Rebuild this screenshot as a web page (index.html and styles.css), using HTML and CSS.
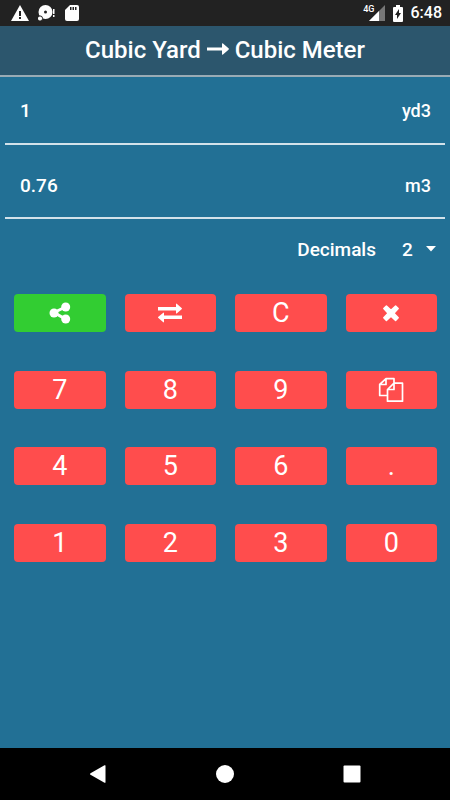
FILE: index.html
```html
<!DOCTYPE html>
<html lang="en">
<head>
<meta charset="utf-8">
<meta name="viewport" content="width=device-width, initial-scale=1">
<title>Cubic Yard to Cubic Meter</title>
<link rel="stylesheet" href="styles.css">
</head>
<body>
<div class="status">
  <div class="status-group notices">
    <svg width="18" height="18" viewBox="0 0 18 18"><path fill="#fff" d="M9 1 18 17H0Z"/><path fill="#222" d="M8 7h2v5H8zM8 13h2v2H8z"/></svg>
    <svg width="18" height="18" viewBox="0 0 18 18"><circle cx="7.500" cy="8" r="7" fill="#fff"/><circle cx="7.500" cy="8" r="1.500" fill="#222"/><circle cx="2" cy="14.500" r="2.600" fill="#fff" stroke="#222"/><path fill="#fff" d="M15 5h1.500v5H15zM15 11h1.500v2H15z"/></svg>
    <svg width="14" height="18" viewBox="0 0 14 18"><path fill="#fff" d="M5 1h7q2 0 2 2v12q0 2-2 2H2q-2 0-2-2V6Z"/><path fill="#222" d="M5 3h1.500v3H5zM7.500 3H9v3H7.500zM10 3h1.500v3H10z"/></svg>
  </div>
  <div class="status-group">
    <div class="signal"><span class="network">4G</span><svg width="16" height="16" viewBox="0 0 16 16"><path fill="#777" d="M16 0v16H0Z"/><path fill="#fff" d="M10 6v10H0Z"/></svg></div>
    <svg class="battery" width="10" height="17" viewBox="0 0 10 17"><path fill="#fff" d="M3 0h4v2h2q1 0 1 1v13q0 1-1 1H1q-1 0-1-1V3q0-1 1-1h2Z"/><path fill="#222" d="M6 4v4h2l-4 6v-4H2Z"/></svg>
    <span class="clock">6:48</span>
  </div>
</div>
<header class="title-bar">
  <h1>Cubic Yard <svg width="22" height="12" viewBox="0 0 22 12" role="img" aria-label="to"><path fill="#fff" d="M0 4.500h15V1q0-1.200 1-.4l5.500 4.700q.8.700 0 1.400L16 11.400q-1 .8-1-.4V7.500H0Z"/></svg> Cubic Meter</h1>
</header>
<main>
  <div class="field">
    <input id="from" type="text" value="1">
    <label for="from">yd3</label>
  </div>
  <div class="field result">
    <input id="to" type="text" value="0.76" readonly>
    <label for="to">m3</label>
  </div>
  <div class="decimals">
    <label for="places">Decimals</label>
    <div class="picker">
      <select id="places"><option>0</option><option>1</option><option selected>2</option><option>3</option><option>4</option></select>
      <svg class="caret" width="10" height="6" viewBox="0 0 10 6"><path fill="#fff" d="M0 0h10L5 5.500Z"/></svg>
    </div>
  </div>
  <div class="keypad">
    <button class="key share" type="button" aria-label="Share"><svg width="22" height="22" viewBox="0 0 22 22"><path d="M16.500 5 5 10.500 16.500 17" fill="none" stroke="#fff" stroke-width="3"/><g fill="#fff"><circle cx="16.700" cy="5" r="4.500"/><circle cx="5" cy="11" r="4.500"/><circle cx="16.700" cy="17" r="4.500"/></g></svg></button>
    <button class="key" type="button" aria-label="Swap units"><svg width="24" height="20" viewBox="0 0 24 20"><path fill="#fff" d="M0 4h18V1.300q0-1.200 1-.4l4.600 4q.8.700 0 1.400L19 10.300q-1 .8-1-.4V7.500H0ZM24 12.500H6V10.300q0-1.200-1-.4L.4 13.700q-.8.700 0 1.400L5 19.100q1 .8 1-.4V16h18Z"/></svg></button>
    <button class="key" type="button">C</button>
    <button class="key" type="button" aria-label="Delete"><svg width="18" height="18" viewBox="0 0 18 18"><path fill="#fff" stroke="#fff" stroke-width="1.500" stroke-linejoin="round" d="M4.400 2 9 6.300 13.600 2 16.200 4.600 11.900 9.200l4.300 4.600-2.600 2.600L9 12.100l-4.600 4.300-2.600-2.600 4.300-4.600-4.300-4.600Z"/></svg></button>
    <button class="key" type="button">7</button>
    <button class="key" type="button">8</button>
    <button class="key" type="button">9</button>
    <button class="key" type="button" aria-label="Copy"><svg width="26" height="26" viewBox="0 0 26 26"><g fill="none" stroke="#fff" stroke-width="1.700" stroke-linejoin="round"><path d="M9.500 18.500H1.700V7.500L8 1.700h8v5M8 1.700v5.800H1.700M16 6.200h8.500v18H9.500V12.500L16 6.200v6.300H9.500"/></g></svg></button>
    <button class="key" type="button">4</button>
    <button class="key" type="button">5</button>
    <button class="key" type="button">6</button>
    <button class="key" type="button">.</button>
    <button class="key" type="button">1</button>
    <button class="key" type="button">2</button>
    <button class="key" type="button">3</button>
    <button class="key" type="button">0</button>
  </div>
</main>
<nav class="system-nav">
  <button type="button" aria-label="Back"><svg width="18" height="18" viewBox="0 0 18 18"><path fill="#fff" d="M1.500 8.200 15.500.3q1-.5 1 .5v16.400q0 1-1 .5L1.500 9.800q-1-.8 0-1.600Z"/></svg></button>
  <button type="button" aria-label="Home"><svg width="18" height="18" viewBox="0 0 18 18"><circle cx="9" cy="9" r="9" fill="#fff"/></svg></button>
  <button type="button" aria-label="Recent apps"><svg width="18" height="18" viewBox="0 0 18 18"><rect x=".5" y=".5" width="17" height="17" rx="1" fill="#fff"/></svg></button>
</nav>
</body>
</html>
```

FILE: styles.css
```css
* {
  box-sizing: border-box;
}

body {
  margin: 0;
  min-height: 100vh;
  display: flex;
  flex-direction: column;
  background: #227095;
  color: #fff;
  font-family: Roboto, "Liberation Sans", sans-serif;
  font-size: 19px;
  font-weight: 500;
}

svg {
  display: block;
}

button,
input,
select {
  margin: 0;
  padding: 0;
  border: 0;
  background: none;
  color: inherit;
  font: inherit;
}

.status {
  height: 26px;
  padding: 0 8px 0 11px;
  display: flex;
  justify-content: space-between;
  align-items: center;
  background: #222;
}

.status-group {
  display: flex;
  align-items: center;
  gap: 8px;
}

.notices {
  gap: 9px;
}

.signal {
  display: flex;
  align-items: flex-end;
}

.network {
  margin-right: -6px;
  align-self: flex-start;
  font-size: 9px;
  line-height: 8px;
}

.clock {
  font-size: 16px;
  line-height: 26px;
}

.title-bar {
  height: 51px;
  padding-bottom: 2px;
  display: flex;
  justify-content: center;
  align-items: center;
  background: #2c566d;
  border-bottom: 2px solid #9aabb5;
}

h1 {
  margin: 0;
  font-size: 24px;
  line-height: 28px;
  font-weight: 500;
}

h1 svg {
  display: inline-block;
  vertical-align: 3px;
}

main {
  flex: 1;
}

.field {
  height: 68px;
  margin: 0 5px;
  padding: 0 14px 0 15px;
  display: flex;
  align-items: center;
  border-bottom: 2px solid #d3e2ea;
}

.result {
  height: 74px;
  padding-top: 8px;
}

.field input {
  flex: 1;
  min-width: 0;
  outline: 0;
}

.field label {
  font-size: 18px;
}

.decimals {
  height: 60px;
  padding-right: 14px;
  display: flex;
  justify-content: flex-end;
  align-items: center;
  gap: 26px;
}

.picker {
  position: relative;
  display: flex;
  align-items: center;
}

.picker select {
  width: 34px;
  appearance: none;
  outline: 0;
}

.caret {
  position: absolute;
  right: 0;
  pointer-events: none;
}

.keypad {
  min-height: 268px;
  margin: 15px 13px 0 14px;
  display: grid;
  grid-template-columns: repeat(4, 1fr);
  grid-auto-rows: 38px;
  align-content: space-between;
  column-gap: 19px;
}

.key {
  display: flex;
  justify-content: center;
  align-items: center;
  border-radius: 4px;
  background: #ff4d4d;
  font-size: 27px;
  font-weight: 400;
  line-height: 38px;
}

.share {
  background: #32cd32;
}

.system-nav {
  height: 52px;
  padding: 0 35px;
  display: grid;
  grid-template-columns: repeat(3, 1fr);
  background: #000;
}

.system-nav button {
  display: flex;
  justify-content: center;
  align-items: center;
}
```
